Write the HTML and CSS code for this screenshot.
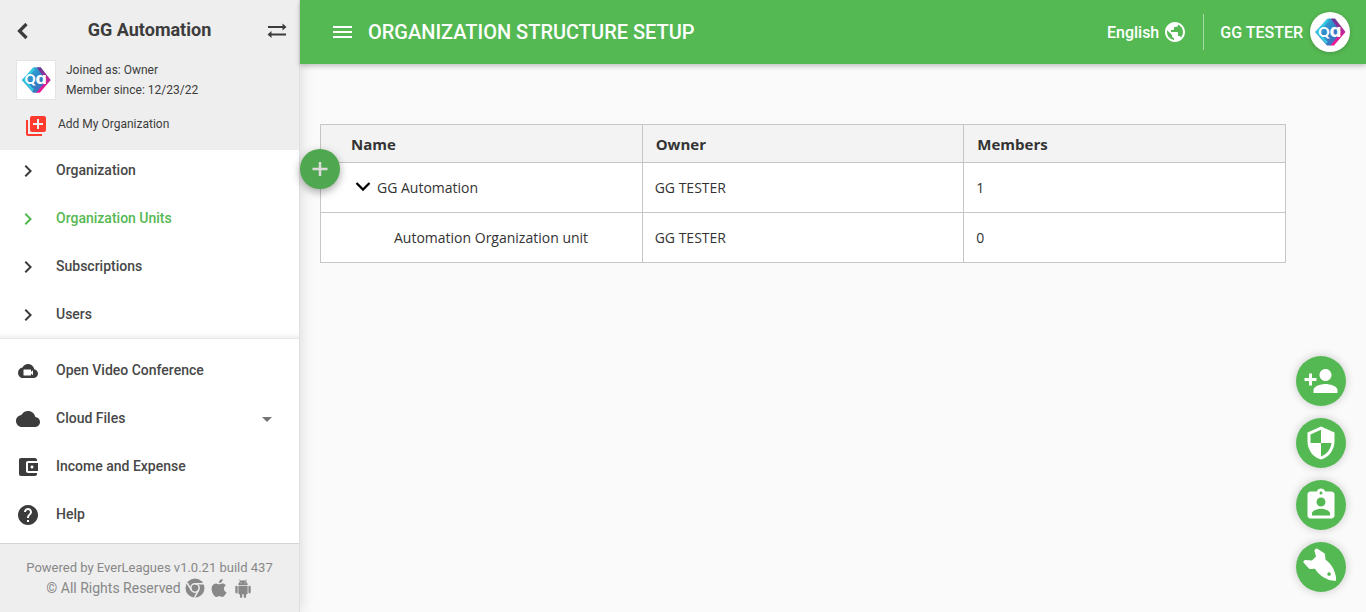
FILE: index.html
```html
<!DOCTYPE html>
<html lang="en">
<head>
<meta charset="utf-8">
<title>Organization Structure Setup</title>
<link rel="stylesheet" href="styles.css">
</head>
<body>
<svg class="defs" aria-hidden="true">
  <defs>
    <linearGradient id="blue" x1="0" y1="0" x2="1" y2="1">
      <stop offset="0" stop-color="#35c8dc"/><stop offset="0.5" stop-color="#2f86c9"/><stop offset="1" stop-color="#4a62b8"/>
    </linearGradient>
    <linearGradient id="pink" x1="0" y1="0" x2="0" y2="1">
      <stop offset="0" stop-color="#5b3b96"/><stop offset="0.45" stop-color="#b8269a"/><stop offset="1" stop-color="#fb1493"/>
    </linearGradient>
    <symbol id="logo" viewBox="0 0 40 40">
      <path d="M21 6.500L25 6.500L35.500 20L24 33.500L20 33.500Z" fill="url(#pink)"/>
      <path d="M18 6.500L20.500 6.500L31 20L20.500 33.500L17 33.500L5 20Z" fill="url(#blue)"/>
      <path d="M18 7.500L7.500 20L17 31" fill="none" stroke="#36c9df" stroke-width="2.500"/>
      <text x="20" y="24.500" text-anchor="middle" class="logo-text">Q<tspan class="logo-a">ɑ</tspan></text>
    </symbol>
    <symbol id="chevron" viewBox="0 0 24 24"><path d="M10 6L8.590 7.410 13.170 12l-4.580 4.590L10 18l6-6z"/></symbol>
  </defs>
</svg>
<div class="app">
  <aside class="sidebar">
    <div class="org">
      <div class="org-top">
        <button class="icon-btn" aria-label="Back"><svg viewBox="0 0 24 24" class="i24"><path d="M16.500 6L9.500 13L16.500 20" fill="none" stroke="currentColor" stroke-width="3.200"/></svg></button>
        <h2>GG Automation</h2>
        <button class="icon-btn" aria-label="Switch organization"><svg viewBox="0 0 24 24" class="i24"><path d="M3 8h14.500V5.500l4 3.500-4 3.500V10H3zM21 17.500H6.500V20l-4-3.500 4-3.500v2.500H21z"/></svg></button>
      </div>
      <div class="profile">
        <svg class="photo" role="img" aria-label="Organization logo"><use href="#logo"/></svg>
        <p>Joined as: Owner<br>Member since: 12/23/22</p>
      </div>
      <a class="add-org" href="#"><svg viewBox="0 0 24 24" class="i24"><path d="M4 6H2v14c0 1.100.9 2 2 2h14v-2H4V6zm16-4H8c-1.100 0-2 .9-2 2v12c0 1.100.9 2 2 2h12c1.100 0 2-.9 2-2V4c0-1.100-.9-2-2-2zm-1 9h-4v4h-2v-4H9V9h4V5h2v4h4v2z"/></svg>Add My Organization</a>
    </div>
    <nav class="menu menu-main">
      <a href="#"><svg class="i24"><use href="#chevron"/></svg><span>Organization</span></a>
      <a href="#" class="active"><svg class="i24"><use href="#chevron"/></svg><span>Organization Units</span></a>
      <a href="#"><svg class="i24"><use href="#chevron"/></svg><span>Subscriptions</span></a>
      <a href="#"><svg class="i24"><use href="#chevron"/></svg><span>Users</span></a>
    </nav>
    <nav class="menu menu-tools">
      <a href="#"><svg viewBox="0 0 24 24" class="i24"><path fill-rule="evenodd" d="M18.200 10.200C17.600 7.200 15.100 5 12 5 9.600 5 7.500 6.400 6.500 8.500 4 8.800 2 11 2 13.700 2 16.600 4.200 19 7 19h11c2.300 0 4-2 4-4.400 0-2.300-1.700-4.200-3.800-4.400zM8 10.500h6.500q.5 0 .5.500v1.800l2-1.600v5l-2-1.600V16q0 .5-.5.500H8q-.5 0-.5-.5v-5q0-.5.5-.5z"/></svg><span>Open Video Conference</span></a>
      <a href="#"><svg viewBox="0 0 24 24" class="i24"><path d="M19.350 10.040C18.670 6.590 15.640 4 12 4 9.110 4 6.600 5.640 5.350 8.040 2.340 8.360 0 10.910 0 14c0 3.310 2.690 6 6 6h13c2.760 0 5-2.240 5-5 0-2.640-2.050-4.780-4.650-4.960z"/></svg><span>Cloud Files</span><svg viewBox="0 0 24 24" class="i24 caret"><path d="M7 10l5 5 5-5z"/></svg></a>
      <a href="#"><svg viewBox="0 0 24 24" class="i24"><path d="M21 18v1c0 1.100-.9 2-2 2H5c-1.110 0-2-.9-2-2V5c0-1.100.89-2 2-2h14c1.100 0 2 .9 2 2v1h-9c-1.110 0-2 .9-2 2v8c0 1.100.89 2 2 2h9zm-9-2h10V8H12v8zm4-2.500c-.83 0-1.500-.67-1.500-1.500s.67-1.500 1.500-1.500 1.500.67 1.500 1.500-.67 1.500-1.500 1.500z"/></svg><span>Income and Expense</span></a>
      <a href="#"><svg viewBox="0 0 24 24" class="i24"><path d="M12 2C6.480 2 2 6.480 2 12s4.480 10 10 10 10-4.480 10-10S17.520 2 12 2zm1 17h-2v-2h2v2zm2.070-7.750l-.9.920C13.450 12.900 13 13.500 13 15h-2v-.5c0-1.100.45-2.100 1.170-2.830l1.240-1.260c.37-.36.59-.86.59-1.410 0-1.100-.9-2-2-2s-2 .9-2 2H8c0-2.210 1.790-4 4-4s4 1.790 4 4c0 .88-.36 1.680-.93 2.250z"/></svg><span>Help</span></a>
    </nav>
    <footer class="credits">
      <span>Powered by EverLeagues v1.0.21 build 437</span>
      <div class="rights">
        <span>© All Rights Reserved</span>
        <a href="#" aria-label="Chrome"><svg viewBox="0 0 20 20" class="i20"><circle cx="10" cy="10" r="9.500"/><g fill="none" stroke="#eee" stroke-width="1.500"><circle cx="10" cy="10" r="4.200"/><path d="M10 5.800h9M6.400 12.100L2.200 5M13.600 12.100L9.500 19.500"/></g></svg></a>
        <a href="#" aria-label="Apple"><svg viewBox="1 1 22 22" class="i20"><path d="M18.700 19.500c-.8 1.200-1.700 2.500-3 2.500s-1.800-.8-3.300-.8-2 .8-3.300.8-2.300-1.300-3.100-2.500c-1.700-2.500-3-7-1.300-10 .9-1.500 2.400-2.400 4.100-2.500 1.300 0 2.500.9 3.300.9s2.300-1.100 3.800-.9c.7 0 2.500.3 3.700 2-3.200 2-2.700 6.400.7 7.800-.3 1-.8 1.900-1.600 2.700zM13 3.500c.7-.9 2-1.500 3-1.500.1 1.200-.3 2.400-1 3.200-.7.900-1.800 1.500-3 1.400-.100-1.100.4-2.300 1-3.100z"/></svg></a>
        <a href="#" aria-label="Android"><svg viewBox="-1 -2 26 26" class="i20"><path d="M6 18c0 .55.450 1 1 1h1v3.500c0 .83.670 1.500 1.500 1.500s1.500-.67 1.500-1.500V19h2v3.500c0 .83.670 1.500 1.500 1.500s1.500-.67 1.500-1.500V19h1c.55 0 1-.45 1-1V8H6v10zM3.500 8C2.670 8 2 8.670 2 9.500v7c0 .83.670 1.500 1.500 1.500S5 17.330 5 16.500v-7C5 8.670 4.330 8 3.500 8zm17 0c-.83 0-1.500.67-1.500 1.500v7c0 .83.670 1.500 1.500 1.500s1.500-.67 1.500-1.500v-7c0-.83-.67-1.500-1.500-1.500zm-4.970-5.840l1.300-1.300c.2-.2.200-.51 0-.71-.2-.2-.51-.2-.71 0l-1.480 1.480C13.850 1.230 12.950 1 12 1c-.96 0-1.860.23-2.660.63L7.850.15c-.2-.2-.51-.2-.71 0-.2.2-.2.51 0 .71l1.310 1.310C6.970 3.260 6 5.010 6 7h12c0-1.990-.97-3.750-2.470-4.840zM10 5H9V4h1v1zm5 0h-1V4h1v1z"/></svg></a>
      </div>
    </footer>
  </aside>
  <div class="page">
    <header class="topbar">
      <button class="icon-btn" aria-label="Menu"><svg viewBox="0 0 24 24" class="i24"><path d="M3 18h19v-2H3v2zm0-5h19v-2H3v2zm0-7v2h19V6H3z"/></svg></button>
      <h1>ORGANIZATION STRUCTURE SETUP</h1>
      <button class="language">English<svg viewBox="0 0 24 24" class="i24"><path d="M12 2C6.480 2 2 6.480 2 12s4.480 10 10 10 10-4.480 10-10S17.520 2 12 2zm-1 17.930c-3.950-.49-7-3.850-7-7.930 0-.62.080-1.210.210-1.790L9 15v1c0 1.100.9 2 2 2v1.930zm6.900-2.540c-.26-.81-1-1.390-1.900-1.390h-1v-3c0-.55-.45-1-1-1H8v-2h2c.55 0 1-.45 1-1V7h2c1.100 0 2-.9 2-2v-.41c2.930 1.190 5 4.060 5 7.410 0 2.080-.8 3.970-2.100 5.390z"/></svg></button>
      <button class="account">GG TESTER<svg class="avatar" aria-hidden="true"><use href="#logo"/></svg></button>
    </header>
    <main class="content">
      <table>
        <thead><tr><th>Name</th><th>Owner</th><th>Members</th></tr></thead>
        <tbody>
          <tr><td><button class="toggle" aria-label="Collapse"><svg viewBox="0 0 16 16"><path d="M1.500 4L8 10.500L14.500 4" fill="none" stroke="#000" stroke-width="2.300"/></svg></button>GG Automation</td><td>GG TESTER</td><td>1</td></tr>
          <tr><td class="child">Automation Organization unit</td><td>GG TESTER</td><td>0</td></tr>
        </tbody>
      </table>
      <button class="add" aria-label="Add unit"><svg viewBox="0 0 16 16"><path d="M8 1v14M.5 8h15" stroke="currentColor" stroke-width="2.500"/></svg></button>
    </main>
  </div>
</div>
<div class="actions">
  <button aria-label="Add person"><svg viewBox="0 0 24 24" class="i36"><path d="M15 12c2.210 0 4-1.790 4-4s-1.790-4-4-4-4 1.790-4 4 1.790 4 4 4zm-9-2V7H4v3H1v2h3v3h2v-3h3v-2H6zm9 4c-2.670 0-8 1.340-8 4v2h16v-2c0-2.660-5.330-4-8-4z"/></svg></button>
  <button aria-label="Security"><svg viewBox="0 0 24 24" class="i36"><path d="M12 1L3 5v6c0 5.550 3.840 10.740 9 12 5.160-1.260 9-6.450 9-12V5l-9-4zm0 10.990h7c-.53 4.120-3.280 7.790-7 8.940V12H5V6.300l7-3.110v8.800z"/></svg></button>
  <button aria-label="Assignments"><svg viewBox="0 0 24 24" class="i36"><path d="M19 3h-4.180C14.400 1.840 13.300 1 12 1c-1.300 0-2.400.84-2.820 2H5c-1.100 0-2 .9-2 2v14c0 1.100.9 2 2 2h14c1.100 0 2-.9 2-2V5c0-1.100-.9-2-2-2zm-7 0c.55 0 1 .45 1 1s-.45 1-1 1-1-.45-1-1 .45-1 1-1zm0 4c1.660 0 3 1.340 3 3s-1.340 3-3 3-3-1.340-3-3 1.340-3 3-3zm6 12H6v-1.400c0-2 4-3.100 6-3.100s6 1.100 6 3.100V19z"/></svg></button>
  <button aria-label="Quick start"><svg viewBox="0 0 50 50" class="i50"><path fill-rule="evenodd" d="M18.500 9Q18.500 6.500 21 6.500L28 11Q29 11.500 29 13L29.500 17.500Q37 23.500 39 31Q40.500 35.500 40 38.700Q34 39.500 28 35.500Q21.500 31.500 19 26.700L14.500 27Q13 27 12 25.500L7.500 20.500Q7 18 9.500 18L16 18.500L20 14.500ZM33 30.200a1.800 1.800 0 1 0 .1 0Z"/></svg></button>
</div>
</body>
</html>
```

FILE: styles.css
```css
* { box-sizing: border-box; }
body {
  margin: 0;
  background: #fafafa;
  color: #3c3c3c;
  font-family: Roboto, "Liberation Sans", sans-serif;
}
h1, h2, p { margin: 0; }
a { color: inherit; text-decoration: none; }
button { border: 0; padding: 0; background: none; color: inherit; font: inherit; cursor: pointer; }
svg { display: block; flex: none; fill: currentColor; }
.defs { position: absolute; width: 0; height: 0; }
.logo-text { font: 900 14px Lato, sans-serif; fill: #fff; }
.logo-a { font: 700 17px "DejaVu Sans", sans-serif; }
.i20 { width: 20px; height: 20px; }
.i24 { width: 24px; height: 24px; }
.i36 { width: 36px; height: 36px; }
.i50 { width: 50px; height: 50px; }

.app { display: flex; height: 100vh; }

.sidebar {
  display: flex;
  flex-direction: column;
  flex: none;
  width: 300px;
  background: #fff;
  border-right: 1px solid #e0e0e0;
  box-shadow: 0 0 14px rgba(0, 0, 0, 0.14);
}
.org { flex: none; height: 150px; padding: 18px 10px 0; background: #eee; }
.org-top { display: flex; align-items: center; justify-content: space-between; height: 24px; }
.org-top h2 { font-size: 18px; line-height: 24px; font-weight: 700; }
.profile { display: flex; gap: 10px; margin-top: 18px; padding-left: 6px; font-size: 12px; line-height: 20px; }
.photo { width: 40px; height: 40px; background: #fff; border: 1px solid #e4e4e4; }
.add-org { display: flex; align-items: flex-start; gap: 10px; margin-top: 12px; padding-left: 14px; font-size: 12px; line-height: 24px; }
.add-org svg { color: #ff3b30; margin-top: 2px; }

.menu { display: flex; flex-direction: column; }
.menu a {
  display: flex;
  align-items: center;
  flex: none;
  gap: 16px;
  height: 48px;
  padding: 0 20px 0 16px;
  font-size: 14px;
  font-weight: 500;
}
.menu a span { color: #484848; }
.menu svg { margin-top: 2px; }
.menu-main { flex: 1; min-height: 0; justify-content: flex-end; overflow: hidden; box-shadow: inset 0 -6px 6px -6px rgba(0, 0, 0, 0.12); }
.menu .active, .menu .active span { color: #55b953; }
.menu-tools { flex: none; padding: 7px 0 5px; border-top: 1px solid #e8e8e8; }
.menu .caret { margin-left: auto; color: #757575; }

.credits {
  flex: none;
  padding: 14px 0;
  background: #eee;
  border-top: 1px solid #d4d4d4;
  color: #888;
  font-size: 13px;
  line-height: 20px;
  text-align: center;
}
.rights { display: flex; justify-content: center; gap: 4px; font-size: 14px; }

.page { flex: 1; min-width: 0; }
.topbar {
  display: flex;
  align-items: center;
  height: 64px;
  padding: 0 16px 0 30px;
  background: #55b953;
  box-shadow: 0 2px 5px rgba(0, 0, 0, 0.24);
  color: #fff;
}
.topbar h1 { flex: 1; margin-left: 14px; font-size: 20px; font-weight: 500; }
.language, .account { display: flex; align-items: center; font-size: 16px; font-weight: 500; }
.language { gap: 4px; height: 36px; padding-right: 16px; border-right: 1px solid #a6dba5; }
.account { gap: 7px; padding-left: 16px; }
.avatar { width: 40px; height: 40px; border-radius: 50%; background: #fff; box-shadow: 0 1px 4px rgba(0, 0, 0, 0.2); }

.content { position: relative; padding: 60px 80px 0 20px; }
table {
  width: 100%;
  table-layout: fixed;
  border-collapse: collapse;
  background: #fff;
  color: #333;
  font-family: "Open Sans", sans-serif;
  font-size: 14px;
}
th, td { padding: 0 12px; border: 1px solid #c6c6c6; text-align: left; }
th { height: 38px; padding: 0 13px; background: #f3f3f3; font-size: 15px; font-weight: 700; }
td { height: 50px; }
th:first-child { padding-left: 30px; }
td:first-child { padding-left: 34px; }
td.child { padding-left: 73px; }
.toggle { display: inline-block; margin-right: 6px; vertical-align: -2px; }
.toggle svg { width: 16px; height: 16px; }
.add {
  position: absolute;
  left: 0;
  top: 85px;
  display: grid;
  place-items: center;
  width: 40px;
  height: 40px;
  border-radius: 50%;
  background: #4fa84f;
  color: #dcdcdc;
  box-shadow: 0 3px 8px rgba(0, 0, 0, 0.35);
}
.add svg { width: 16px; height: 16px; }

.actions { position: fixed; right: 20px; bottom: 20px; display: grid; gap: 12px; }
.actions button {
  display: grid;
  place-items: center;
  width: 50px;
  height: 50px;
  border-radius: 50%;
  background: #55b953;
  color: #fff;
  box-shadow: 0 0 10px rgba(0, 0, 0, 0.2);
}
```
